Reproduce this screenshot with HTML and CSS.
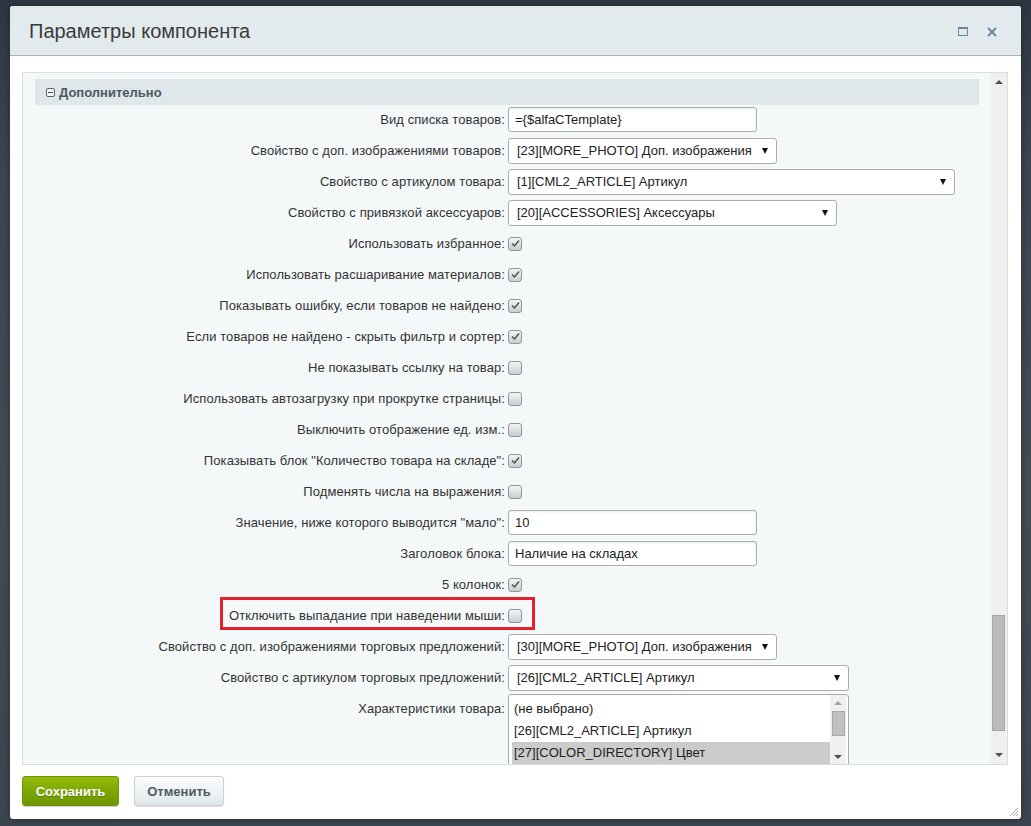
FILE: index.html
```html
<!DOCTYPE html>
<html lang="ru">
<head>
<meta charset="utf-8">
<title>Параметры компонента</title>
<link rel="stylesheet" href="styles.css">
</head>
<body>
<div class="dialog">
  <div class="dlg-head">
    <h1 class="dlg-title">Параметры компонента</h1>
    <div class="dlg-tools">
      <span class="ic-max"></span>
      <svg class="ic-close" width="10" height="10" viewBox="0 0 10 10"><path d="M1 1L9 9M9 1L1 9" stroke="#6d86a0" stroke-width="2" fill="none"/></svg>
    </div>
  </div>
  <div class="dlg-body">
    <div class="panel">
      <div class="panel-scroll">
        <div class="section-bar"><span class="minus"></span>Дополнительно</div>
        <div class="form">
          <div class="row"><span class="lbl">Вид списка товаров:</span><div class="ctl"><span class="inp">={$alfaCTemplate}</span></div></div>
          <div class="row"><span class="lbl">Свойство с доп. изображениями товаров:</span><div class="ctl"><span class="sel w269"><span class="sel-t">[23][MORE_PHOTO] Доп. изображения</span><span class="arr"></span></span></div></div>
          <div class="row"><span class="lbl">Свойство с артикулом товара:</span><div class="ctl"><span class="sel w447"><span class="sel-t">[1][CML2_ARTICLE] Артикул</span><span class="arr"></span></span></div></div>
          <div class="row"><span class="lbl">Свойство с привязкой аксессуаров:</span><div class="ctl"><span class="sel w329"><span class="sel-t">[20][ACCESSORIES] Аксессуары</span><span class="arr"></span></span></div></div>
          <div class="row"><span class="lbl">Использовать избранное:</span><div class="ctl"><span class="cb on"><svg width="11" height="11" viewBox="0 0 11 11"><path d="M2 5.5L4.5 8L9 2.5" stroke="#505050" stroke-width="1.5" fill="none"/></svg></span></div></div>
          <div class="row"><span class="lbl">Использовать расшаривание материалов:</span><div class="ctl"><span class="cb on"><svg width="11" height="11" viewBox="0 0 11 11"><path d="M2 5.5L4.5 8L9 2.5" stroke="#505050" stroke-width="1.5" fill="none"/></svg></span></div></div>
          <div class="row"><span class="lbl">Показывать ошибку, если товаров не найдено:</span><div class="ctl"><span class="cb on"><svg width="11" height="11" viewBox="0 0 11 11"><path d="M2 5.5L4.5 8L9 2.5" stroke="#505050" stroke-width="1.5" fill="none"/></svg></span></div></div>
          <div class="row"><span class="lbl">Если товаров не найдено - скрыть фильтр и сортер:</span><div class="ctl"><span class="cb on"><svg width="11" height="11" viewBox="0 0 11 11"><path d="M2 5.5L4.5 8L9 2.5" stroke="#505050" stroke-width="1.5" fill="none"/></svg></span></div></div>
          <div class="row"><span class="lbl">Не показывать ссылку на товар:</span><div class="ctl"><span class="cb"></span></div></div>
          <div class="row"><span class="lbl">Использовать автозагрузку при прокрутке страницы:</span><div class="ctl"><span class="cb"></span></div></div>
          <div class="row"><span class="lbl">Выключить отображение ед. изм.:</span><div class="ctl"><span class="cb"></span></div></div>
          <div class="row"><span class="lbl">Показывать блок "Количество товара на складе":</span><div class="ctl"><span class="cb on"><svg width="11" height="11" viewBox="0 0 11 11"><path d="M2 5.5L4.5 8L9 2.5" stroke="#505050" stroke-width="1.5" fill="none"/></svg></span></div></div>
          <div class="row"><span class="lbl">Подменять числа на выражения:</span><div class="ctl"><span class="cb"></span></div></div>
          <div class="row"><span class="lbl">Значение, ниже которого выводится "мало":</span><div class="ctl"><span class="inp">10</span></div></div>
          <div class="row"><span class="lbl">Заголовок блока:</span><div class="ctl"><span class="inp">Наличие на складах</span></div></div>
          <div class="row"><span class="lbl">5 колонок:</span><div class="ctl"><span class="cb on"><svg width="11" height="11" viewBox="0 0 11 11"><path d="M2 5.5L4.5 8L9 2.5" stroke="#505050" stroke-width="1.5" fill="none"/></svg></span></div></div>
          <div class="row marked"><span class="lbl">Отключить выпадание при наведении мыши:</span><div class="ctl"><span class="cb"></span></div><span class="mark"></span></div>
          <div class="row"><span class="lbl">Свойство с доп. изображениями торговых предложений:</span><div class="ctl"><span class="sel w269"><span class="sel-t">[30][MORE_PHOTO] Доп. изображения</span><span class="arr"></span></span></div></div>
          <div class="row"><span class="lbl">Свойство с артикулом торговых предложений:</span><div class="ctl"><span class="sel w341"><span class="sel-t">[26][CML2_ARTICLE] Артикул</span><span class="arr"></span></span></div></div>
          <div class="row multi-row"><span class="lbl">Характеристики товара:</span>
            <div class="ctl">
              <div class="multi">
                <div class="opts">
                  <div class="opt">(не выбрано)</div>
                  <div class="opt">[26][CML2_ARTICLE] Артикул</div>
                  <div class="opt selected">[27][COLOR_DIRECTORY] Цвет</div>
                </div>
                <div class="mscroll"><span class="m-up"></span><span class="m-thumb"></span><span class="m-down"></span></div>
              </div>
            </div>
          </div>
        </div>
      </div>
      <div class="vscroll">
        <span class="v-up"></span>
        <div class="v-track"><span class="v-thumb"></span></div>
        <span class="v-down"></span>
      </div>
    </div>
  </div>
  <div class="dlg-foot">
    <button class="btn save">Сохранить</button>
    <button class="btn cancel">Отменить</button>
  </div>
  <svg class="grip" width="12" height="12" viewBox="0 0 12 12"><path d="M11 3L3 11M11 6L6 11M11 9L9 11" stroke="#a8a8a8" stroke-width="1" fill="none"/></svg>
</div>
</body>
</html>
```

FILE: styles.css
```css
* { box-sizing: border-box; }
html, body { margin: 0; padding: 0; }
body {
  width: 1031px;
  height: 826px;
  overflow: hidden;
  background: linear-gradient(180deg, #2c3742 0%, #3a4550 20%, #414c55 60%, #3a454f 100%);
  font-family: "Liberation Sans", Arial, sans-serif;
  font-size: 13px;
  color: #333;
  padding: 6px 0 0 10px;
}
.dialog {
  position: relative;
  width: 1011px;
  height: 813px;
  background: #fff;
  border-radius: 3px;
  box-shadow: 0 0 6px rgba(0,0,0,.35);
  display: flex;
  flex-direction: column;
}
.dlg-head {
  height: 50px;
  flex: none;
  background: #e3eaed;
  border-bottom: 1px solid #aab1b5;
  border-radius: 3px 3px 0 0;
  display: flex;
  align-items: center;
  justify-content: space-between;
  padding: 0 24px 0 19px;
}
.dlg-title {
  margin: 0;
  font-weight: normal;
  font-size: 20px;
  color: #3a3a3a;
  line-height: 24px;
}
.dlg-tools { display: flex; align-items: center; gap: 19px; padding-top: 2px; }
.ic-max {
  width: 10px; height: 9px;
  border: 1px solid #6d86a0;
  border-top-width: 2px;
}
.ic-close { display: block; }
.dlg-body {
  flex: none;
  padding: 16px 13px 0 12px;
}
.panel {
  height: 693px;
  border: 1px solid #d5e0e6;
  background: #f5f8f9;
  display: flex;
}
.panel-scroll {
  flex: 1;
  overflow: hidden;
  padding: 6px 11px 0 12px;
}
.section-bar {
  height: 26px;
  background: #e0e7ea;
  display: flex;
  align-items: center;
  padding-left: 11px;
  font-weight: bold;
  font-size: 13px;
  color: #4a5961;
  margin-bottom: -1px;
}
.minus {
  width: 9px; height: 9px;
  border: 1px solid #55646c;
  border-radius: 2px;
  margin-right: 4px;
  position: relative;
  background: #f4f7f8;
}
.minus::after {
  content: "";
  position: absolute;
  left: 1px; right: 1px; top: 3px;
  height: 1px;
  background: #3e4a50;
}
.row {
  display: grid;
  grid-template-columns: 470px 1fr;
  column-gap: 3px;
  height: 31px;
  align-items: center;
  position: relative;
}
.lbl { text-align: right; white-space: nowrap; color: #333; letter-spacing: 0.08px; }
.ctl { display: flex; align-items: center; }
.inp {
  width: 249px;
  height: 25px;
  border: 1px solid #a9adb0;
  border-radius: 3px;
  background: #fff;
  box-shadow: inset 0 1px 2px rgba(0,0,0,.08);
  padding: 0 6px;
  line-height: 23px;
  color: #222;
}
.sel {
  height: 26px;
  border: 1px solid #a9adb0;
  border-radius: 3px;
  background: #fff;
  display: flex;
  align-items: center;
  justify-content: space-between;
  padding: 0 8px 0 8px;
  color: #222;
}
.w269 { width: 269px; }
.w447 { width: 447px; }
.w329 { width: 329px; }
.w341 { width: 341px; }
.sel-t { white-space: nowrap; }
.arr {
  width: 0; height: 0;
  border-left: 3px solid transparent;
  border-right: 3px solid transparent;
  border-top: 6px solid #111;
}
.cb {
  width: 14px; height: 14px;
  border: 1px solid #8d969c;
  border-radius: 3px;
  background: linear-gradient(180deg, #f3f4f5 0%, #c9cdd0 100%);
  display: flex;
  align-items: center;
  justify-content: center;
}
.cb svg { display: block; }
.mark {
  position: absolute;
  left: 185px;
  top: -3px;
  width: 315px;
  height: 33px;
  border: 3px solid #e5222b;
  pointer-events: none;
}
.multi-row {
  height: auto;
  align-items: start;
  padding-top: 1px;
}
.multi-row .lbl { padding-top: 7px; }
.multi {
  width: 341px;
  height: 100px;
  border: 1px solid #a9adb0;
  border-radius: 3px;
  background: #fff;
  display: flex;
  padding: 3px 2px 0 3px;
}
.opts { flex: 1; }
.opt {
  height: 22px;
  line-height: 22px;
  padding-left: 2px;
  white-space: nowrap;
  color: #222;
}
.opt.selected { background: #cbcbcb; }
.mscroll {
  width: 16px;
  margin-top: -3px;
  position: relative;
  background: #f0f0f0;
}
.m-up {
  position: absolute; left: 4px; top: 6px;
  border-left: 4px solid transparent;
  border-right: 4px solid transparent;
  border-bottom: 4px solid #a3a3a3;
}
.m-thumb {
  position: absolute; left: 2px; top: 16px;
  width: 13px; height: 25px;
  background: #c1c1c1;
  border: 1px solid #a9a9a9;
}
.m-down {
  position: absolute; left: 4px; top: 60px;
  border-left: 4px solid transparent;
  border-right: 4px solid transparent;
  border-top: 4px solid #505050;
}
.vscroll {
  width: 17px;
  flex: none;
  background: #f0f0f0;
  display: flex;
  flex-direction: column;
  align-items: center;
}
.v-up {
  margin-top: 7px;
  border-left: 4px solid transparent;
  border-right: 4px solid transparent;
  border-bottom: 4px solid #505050;
}
.v-track { flex: 1; width: 100%; position: relative; }
.v-thumb {
  position: absolute;
  left: 2px; top: 531px;
  width: 13px; height: 116px;
  background: #bcbcbc;
  border: 1px solid #a6a6a6;
}
.v-down {
  margin-bottom: 7px;
  border-left: 4px solid transparent;
  border-right: 4px solid transparent;
  border-top: 4px solid #505050;
}
.dlg-foot {
  flex: none;
  display: flex;
  gap: 15px;
  padding: 11px 12px 0 12px;
}
.btn {
  height: 30px;
  border-radius: 3px;
  font-family: "Liberation Sans", Arial, sans-serif;
  font-weight: bold;
  font-size: 13px;
  padding: 0;
  cursor: pointer;
}
.save {
  width: 97px;
  color: #fff;
  background: linear-gradient(180deg, #93bb0d 0%, #7ea705 50%, #6d9600 100%);
  border: 1px solid #6f9407;
  text-shadow: 0 1px 0 rgba(60,80,0,.5);
  box-shadow: 0 1px 1px rgba(0,0,0,.2);
}
.cancel {
  width: 90px;
  color: #4e5b62;
  background: linear-gradient(180deg, #fafbfc 0%, #eef2f4 55%, #dfe5e8 100%);
  border: 1px solid #c9d1d5;
  box-shadow: 0 1px 1px rgba(0,0,0,.12);
}
.grip {
  position: absolute;
  right: 2px;
  bottom: 2px;
}
```
